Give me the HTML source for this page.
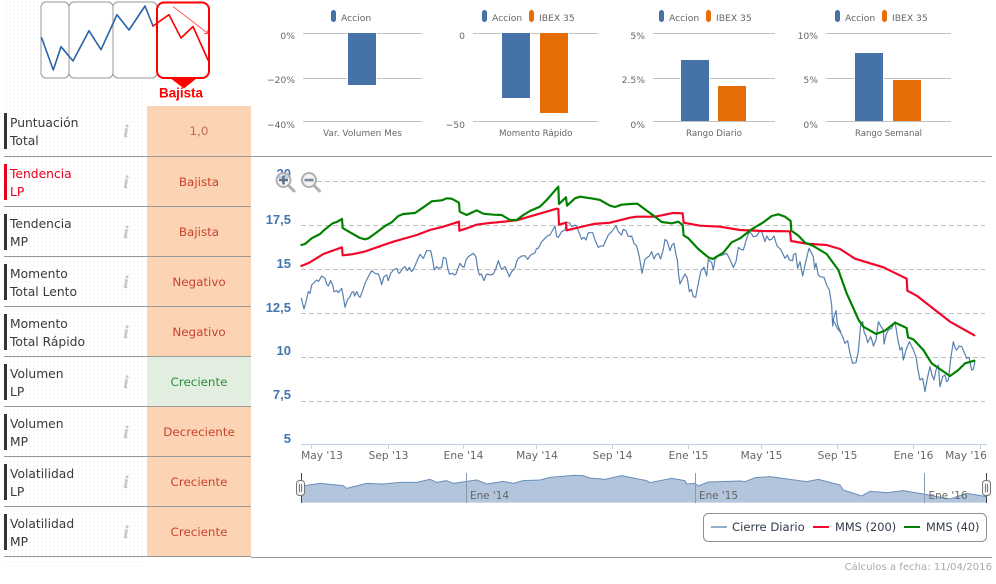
<!DOCTYPE html>
<html lang="es"><head><meta charset="utf-8"><title>Análisis</title>
<style>
html,body{margin:0;padding:0;background:#fff;width:996px;height:584px;overflow:hidden}
svg{display:block;font-family:"DejaVu Sans","Liberation Sans",sans-serif}
.l{font-size:12.3px;fill:#3a3a3a}
.c{font-size:11.9px;text-anchor:middle}
.r{fill:#c9432f}
.i{font-family:"Liberation Serif",serif;font-style:italic;font-weight:bold;font-size:18px;fill:#c8c8c8;stroke:#c8c8c8;stroke-width:.3;text-anchor:middle}
.s{font-size:9.2px;fill:#666}
.e{text-anchor:end}
.m{text-anchor:middle}
.y{font-family:"Liberation Sans",sans-serif;font-weight:bold;font-size:13px;fill:#4276b0;text-anchor:end}
.x{font-size:10.6px;fill:#666;text-anchor:middle}
.g{stroke:#c0c0c0;stroke-width:1;stroke-dasharray:5 3}
.b{stroke:#c0c0c0;stroke-width:1}
.h{stroke:#999;stroke-width:1}
.z{fill:none;stroke-linejoin:round;stroke-linecap:round}
</style></head><body>
<svg width="996" height="584" viewBox="0 0 996 584" xmlns="http://www.w3.org/2000/svg">
<defs><pattern id="d" width="4" height="4" patternUnits="userSpaceOnUse"><rect x="1" y="1" width="2" height="2" fill="#f8f8f8"/></pattern></defs>
<rect x="5" y="0" width="140" height="566" fill="url(#d)"/>

<!-- trend widget -->
<g fill="#fff" stroke="#999" stroke-width="1">
<rect x="41" y="2" width="28" height="76" rx="5"/>
<rect x="69" y="2" width="44" height="76" rx="5"/>
<rect x="113" y="2" width="44" height="76" rx="5"/>
</g>
<rect x="157" y="2.5" width="52" height="75.5" rx="7" fill="#fff" stroke="#f00" stroke-width="2"/>
<path d="M170 78L197 78L184 88.5Z" fill="#f00"/>
<polyline class="z" stroke="#2a62a8" stroke-width="1.6" points="41.7,38 53.3,70 61,46.7 73,61 89,30.7 101,49.7 117,14.7 129,30 145,6 153,26"/>
<polyline class="z" stroke="#f00" stroke-width="1.6" points="153,26 169,14.7 181,38 193,26.5 208,60"/>
<path d="M173 6.5L208 33.5M204 33.5L208 33.5L207 30" fill="none" stroke="#f55" stroke-width=".9"/>
<text x="181" y="97.5" text-anchor="middle" style="font-family:'Liberation Sans',sans-serif;font-weight:bold;font-size:13.4px" fill="#f00">Bajista</text>

<!-- cells -->
<rect x="147" y="106" width="104" height="50" fill="#fcd4b4"/>
<rect x="147" y="157" width="104" height="49" fill="#fcd4b4"/>
<rect x="147" y="207" width="104" height="49" fill="#fcd4b4"/>
<rect x="147" y="257" width="104" height="49" fill="#fcd4b4"/>
<rect x="147" y="307" width="104" height="49" fill="#fcd4b4"/>
<rect x="147" y="357" width="104" height="49" fill="#e2efe0"/>
<rect x="147" y="407" width="104" height="49" fill="#fcd4b4"/>
<rect x="147" y="457" width="104" height="49" fill="#fcd4b4"/>
<rect x="147" y="507" width="104" height="49" fill="#fcd4b4"/>

<!-- row separators -->
<line class="h" x1="4" x2="992" y1="156.5" y2="156.5"/>
<line class="h" x1="4" x2="251" y1="206.5" y2="206.5"/>
<line class="h" x1="4" x2="251" y1="256.5" y2="256.5"/>
<line class="h" x1="4" x2="251" y1="306.5" y2="306.5"/>
<line class="h" x1="4" x2="251" y1="356.5" y2="356.5"/>
<line class="h" x1="4" x2="251" y1="406.5" y2="406.5"/>
<line class="h" x1="4" x2="251" y1="456.5" y2="456.5"/>
<line class="h" x1="4" x2="251" y1="556.5" y2="556.5"/>
<line class="h" x1="4" x2="251" y1="506.5" y2="506.5"/>
<line class="h" x1="251" x2="992" y1="557.5" y2="557.5"/>

<!-- left bars -->
<g fill="#333">
<rect x="4" y="113" width="3" height="36"/>
<rect x="4" y="214" width="3" height="36"/>
<rect x="4" y="264" width="3" height="36"/>
<rect x="4" y="314" width="3" height="36"/>
<rect x="4" y="364" width="3" height="36"/>
<rect x="4" y="414" width="3" height="36"/>
<rect x="4" y="464" width="3" height="36"/>
<rect x="4" y="514" width="3" height="36"/>
</g>
<rect x="4" y="164" width="3" height="36" fill="#e8001c"/>

<!-- row labels -->
<text class="l" x="10" y="127">Puntuación</text><text class="l" x="10" y="145">Total</text>
<text class="l" x="10" y="178" style="fill:#e8001c">Tendencia</text><text class="l" x="10" y="196" style="fill:#e8001c">LP</text>
<text class="l" x="10" y="228">Tendencia</text><text class="l" x="10" y="246">MP</text>
<text class="l" x="10" y="278">Momento</text><text class="l" x="10" y="296">Total Lento</text>
<text class="l" x="10" y="328">Momento</text><text class="l" x="10" y="346">Total Rápido</text>
<text class="l" x="10" y="378">Volumen</text><text class="l" x="10" y="396">LP</text>
<text class="l" x="10" y="428">Volumen</text><text class="l" x="10" y="446">MP</text>
<text class="l" x="10" y="478">Volatilidad</text><text class="l" x="10" y="496">LP</text>
<text class="l" x="10" y="528">Volatilidad</text><text class="l" x="10" y="546">MP</text>

<!-- i icons -->
<text class="i" x="126" y="137">i</text>
<text class="i" x="126" y="188">i</text>
<text class="i" x="126" y="238">i</text>
<text class="i" x="126" y="288">i</text>
<text class="i" x="126" y="338">i</text>
<text class="i" x="126" y="388">i</text>
<text class="i" x="126" y="438">i</text>
<text class="i" x="126" y="488">i</text>
<text class="i" x="126" y="538">i</text>

<!-- values -->
<text class="c" x="199" y="135" fill="#c4685a">1,0</text>
<text class="c r" x="199" y="186">Bajista</text>
<text class="c r" x="199" y="236">Bajista</text>
<text class="c r" x="199" y="286">Negativo</text>
<text class="c r" x="199" y="336">Negativo</text>
<text class="c" x="199" y="386" fill="#2e8b3a">Creciente</text>
<text class="c r" x="199" y="436">Decreciente</text>
<text class="c r" x="199" y="486">Creciente</text>
<text class="c r" x="199" y="536">Creciente</text>

<!-- bar chart 1 -->
<line class="b" x1="303" x2="422" y1="33.5" y2="33.5"/><line class="b" x1="303" x2="422" y1="78.5" y2="78.5"/><line class="b" x1="303" x2="422" y1="121.5" y2="121.5"/>
<rect x="347" y="33" width="30" height="53" fill="#fff"/><rect x="348" y="33" width="28" height="52" fill="#4572a7"/>
<rect x="331" y="10" width="5" height="12" rx="2.5" fill="#4572a7"/><text class="s" x="341" y="21">Accion</text>
<text class="s e" x="295" y="39">0%</text><text class="s e" x="295" y="83">−20%</text><text class="s e" x="295" y="128">−40%</text>
<text class="s" x="323" y="136" textLength="79" lengthAdjust="spacingAndGlyphs">Var. Volumen Mes</text>

<!-- bar chart 2 -->
<line class="b" x1="473" x2="598" y1="33.5" y2="33.5"/><line class="b" x1="473" x2="598" y1="121.5" y2="121.500"/>
<rect x="501" y="33" width="30" height="66" fill="#fff"/><rect x="539" y="33" width="30" height="81" fill="#fff"/>
<rect x="502" y="33" width="28" height="65" fill="#4572a7"/><rect x="540" y="33" width="28" height="80" fill="#e66c06"/>
<rect x="482" y="10" width="5" height="12" rx="2.5" fill="#4572a7"/><text class="s" x="492" y="21">Accion</text>
<rect x="529" y="10" width="5" height="12" rx="2.5" fill="#e66c06"/><text class="s" x="539" y="21">IBEX 35</text>
<text class="s e" x="465" y="39">0</text><text class="s e" x="465" y="128">−50</text>
<text class="s" x="499" y="136" textLength="73.5" lengthAdjust="spacingAndGlyphs">Momento Rápido</text>

<!-- bar chart 3 -->
<line class="b" x1="653" x2="775" y1="33.5" y2="33.5"/><line class="b" x1="653" x2="775" y1="78.5" y2="78.5"/><line class="b" x1="653" x2="775" y1="121.5" y2="121.5"/>
<rect x="680" y="59" width="30" height="62" fill="#fff"/><rect x="717" y="85" width="30" height="36" fill="#fff"/>
<rect x="681" y="60" width="28" height="61" fill="#4572a7"/><rect x="718" y="86" width="28" height="35" fill="#e66c06"/>
<rect x="659" y="10" width="5" height="12" rx="2.5" fill="#4572a7"/><text class="s" x="669" y="21">Accion</text>
<rect x="706" y="10" width="5" height="12" rx="2.5" fill="#e66c06"/><text class="s" x="716" y="21">IBEX 35</text>
<text class="s e" x="645" y="39">5%</text><text class="s e" x="645" y="83">2.5%</text><text class="s e" x="645" y="128">0%</text>
<text class="s" x="686" y="136" textLength="56" lengthAdjust="spacingAndGlyphs">Rango Diario</text>

<!-- bar chart 4 -->
<line class="b" x1="826" x2="951" y1="33.5" y2="33.5"/><line class="b" x1="826" x2="951" y1="78.5" y2="78.5"/><line class="b" x1="826" x2="951" y1="121.5" y2="121.5"/>
<rect x="854" y="52" width="30" height="69" fill="#fff"/><rect x="892" y="79" width="30" height="42" fill="#fff"/>
<rect x="855" y="53" width="28" height="68" fill="#4572a7"/><rect x="893" y="80" width="28" height="41" fill="#e66c06"/>
<rect x="835" y="10" width="5" height="12" rx="2.5" fill="#4572a7"/><text class="s" x="845" y="21">Accion</text>
<rect x="882" y="10" width="5" height="12" rx="2.5" fill="#e66c06"/><text class="s" x="892" y="21">IBEX 35</text>
<text class="s e" x="818" y="39">10%</text><text class="s e" x="818" y="83">5%</text><text class="s e" x="818" y="128">0%</text>
<text class="s" x="855" y="136" textLength="67" lengthAdjust="spacingAndGlyphs">Rango Semanal</text>

<!-- main chart grid -->
<line class="g" x1="301" x2="985" y1="181.500" y2="181.500"/>
<line class="g" x1="301" x2="985" y1="225.500" y2="225.500"/>
<line class="g" x1="301" x2="985" y1="269.500" y2="269.500"/>
<line class="g" x1="301" x2="985" y1="313.500" y2="313.500"/>
<line class="g" x1="301" x2="985" y1="357.500" y2="357.500"/>
<line class="g" x1="301" x2="985" y1="401.500" y2="401.500"/>
<line x1="301" x2="987" y1="444.500" y2="444.500" stroke="#c0d0e0"/>
<path d="M311.500 444V449M388.500 444V449M463.500 444V449M536.500 444V449M612.500 444V449M688.500 444V449M761.500 444V449M837.500 444V449M913.500 444V449M980.500 444V449" stroke="#c0d0e0"/>

<text class="y" x="291" y="178">20</text>
<text class="y" x="291" y="224">17,5</text>
<text class="y" x="291" y="268">15</text>
<text class="y" x="291" y="312">12,5</text>
<text class="y" x="291" y="355">10</text>
<text class="y" x="291" y="399">7,5</text>
<text class="y" x="291" y="443">5</text>

<!-- zoom icons -->
<g fill="none" stroke="#b0b0b0">
<path d="M288.500 185.500L294 191M314 185.500L319.500 191" stroke-width="3" stroke-linecap="round"/>
<circle cx="283.500" cy="180" r="7" stroke-width="2" fill="#eee" fill-opacity=".6"/>
<circle cx="309" cy="180" r="7" stroke-width="2" fill="#eee" fill-opacity=".6"/>
</g>
<path d="M279 180H288M283.500 175.500V184.500" stroke="#5a7088" stroke-width="2.500" fill="none"/>
<path d="M304.500 180H313.500" stroke="#7a8a9a" stroke-width="2.500" fill="none"/>

<!-- blue price line -->
<g transform="translate(260,160) scale(.33333)" stroke="#4572a7" stroke-width="3.6" stroke-opacity=".9">
<polyline class="z" points="124,415 132,447 138,425 145,395 150,400 155,375 162,368 170,360 176,364 185,348 195,355 200,372 205,378 212,362 218,375 222,395 230,392 235,398 245,385 250,410 255,442 262,420 270,410 275,398 280,395 284,408 290,395 296,408 300,412 308,392 315,370 325,350 335,332 345,340 355,342 360,355 365,374 372,350 380,345 385,362 392,340 400,330 410,325 416,340 420,338 428,325 435,320 442,332 448,322 455,335 462,325 470,305 480,283 490,295 500,272 512,272 518,300 523,330 530,320 535,325 545,322 550,292 558,295 563,325 568,342 578,340 583,345 588,342 594,325 600,310 606,318 612,322 618,300 625,290 640,280 648,290 652,320 658,345 664,342 672,362 678,345 682,342 690,345 700,342 708,325 715,302 722,322 725,328 735,320 742,335 748,350 755,335 765,325 770,305 775,295 785,288 795,287 803,298 812,285 825,278 830,265 835,265 845,245 855,235 862,228 870,225 878,210 885,198 890,230 895,232 905,215 915,210 920,186 930,190 935,200 945,195 950,200 958,220 965,238 972,232 978,240 985,218 998,218 1005,240 1015,262 1022,258 1030,258 1038,240 1045,225 1055,215 1068,197 1075,215 1085,225 1090,208 1098,212 1104,228 1110,230"/>
</g>
<g transform="translate(630,160) scale(.33333)" stroke="#4572a7" stroke-width="3.6" stroke-opacity=".9">
<polyline class="z" points="0,230 5,228 12,250 20,258 28,290 32,315 36,340 45,298 52,292 58,288 65,275 72,297 78,285 85,280 92,297 100,268 105,238 112,245 120,272 126,255 132,250 138,285 142,300 146,345 150,372 158,355 165,342 172,355 178,395 184,388 190,410 197,412 204,375 213,332 222,322 230,348 235,298 245,308 250,330 255,298 265,288 278,285 290,280 298,295 310,322 318,305 325,262 332,268 340,270 350,235 358,215 365,222 370,230 380,228 388,215 395,215 405,245 410,228 418,240 425,238 432,228 440,255 445,262 452,268 465,295 472,285 478,300 488,302 490,285 497,280 503,325 510,305 518,348 526,310 537,265 545,280 550,290 554,325 558,310 565,345 570,350 582,352 590,375 598,390 605,435 608,498 612,470 618,452 622,490 625,500 632,515"/>
</g>
<g transform="translate(630,320) scale(.33333)" stroke="#4572a7" stroke-width="3.6" stroke-opacity=".9">
<polyline class="z" points="607,0 615,10 622,25 630,35 637,48 645,70 653,62 660,100 668,130 678,128 685,95 692,15 698,5 702,35 708,48 713,68 722,50 727,65 730,78 738,60 745,5 752,18 760,30 762,72 768,45 775,30 785,25 795,5 803,55 810,90 816,82 820,120 828,90 838,65 848,85 858,110 864,150 870,180 878,175 885,215 892,175 900,140 906,165 912,180 918,150 925,135 930,200 938,170 945,165 950,185 955,180 963,110 970,65 976,85 980,90 988,78 995,80 1005,102 1010,115 1017,112 1025,150 1030,148 1035,125"/>
</g>

<!-- red MMS 200 -->
<g transform="translate(260,160) scale(.33333)" stroke="#f4062a" stroke-width="6.500">
<polyline class="z" points="124,318 150,307 190,282 246,262 248,286 275,283 310,276 400,245 470,225 510,210 550,200 597,185 598,212 620,205 650,194 680,190 770,181 890,146 895,147 897,194 918,188 920,211 1000,192 1050,188 1110,173"/>
</g>
<g transform="translate(630,160) scale(.33333)" stroke="#f4062a" stroke-width="6.500">
<polyline class="z" points="0,173 20,170 75,170 130,159 158,160 161,188 210,197 270,200 330,210 400,213 480,214 483,243 530,251 590,255 630,267 675,296 760,322 830,356 832,392 860,407 960,485 1033,526"/>
</g>

<!-- green MMS 40 -->
<g transform="translate(260,160) scale(.33333)" stroke="#008000" stroke-width="6.500">
<polyline class="z" points="124,255 135,252 155,235 180,222 195,208 218,190 230,186 246,177 248,204 270,217 300,234 315,238 325,235 350,217 375,198 395,187 415,168 430,162 465,159 490,142 515,124 545,121 560,115 575,116 597,128 599,155 620,165 650,151 670,161 700,164 725,165 750,180 770,180 790,165 810,153 840,140 860,120 895,80 897,132 918,112 921,137 945,115 960,110 1000,116 1020,120 1050,137 1065,141 1085,134 1110,132"/>
</g>
<g transform="translate(630,160) scale(.33333)" stroke="#008000" stroke-width="6.500">
<polyline class="z" points="0,132 22,131 45,148 75,170 95,186 125,190 145,185 158,195 161,226 175,235 205,267 235,292 248,297 280,278 305,247 330,235 365,208 400,187 425,168 445,163 465,170 482,183 484,212 505,227 525,248 550,258 590,282 625,330 650,400 686,480 700,500 738,522 765,512 795,488 830,504 834,532 850,538 880,570 905,610 960,648 985,630 1005,610 1033,602"/>
</g>

<!-- x axis labels -->
<text class="x" x="322" y="459">May '13</text>
<text class="x" x="388.500" y="459">Sep '13</text>
<text class="x" x="463.500" y="459">Ene '14</text>
<text class="x" x="537" y="459">May '14</text>
<text class="x" x="612.500" y="459">Sep '14</text>
<text class="x" x="688.500" y="459">Ene '15</text>
<text class="x" x="761.500" y="459">May '15</text>
<text class="x" x="837.500" y="459">Sep '15</text>
<text class="x" x="913.500" y="459">Ene '16</text>
<text class="x" x="966" y="459">May '16</text>

<!-- navigator -->
<g transform="translate(260,320) scale(.33333)">
<polygon fill="#b3c5dc" points="124,548 124,500 135,497 180,490 250,497 260,505 320,490 370,492 420,487 470,487 510,478 530,487 560,482 580,490 620,484 650,480 680,492 730,484 760,490 790,482 840,480 870,472 940,466 970,467 990,474 1035,478 1085,467 1110,472 1110,548"/>
<polyline class="z" stroke="#6a8fba" stroke-width="3" points="124,500 135,497 180,490 250,497 260,505 320,490 370,492 420,487 470,487 510,478 530,487 560,482 580,490 620,484 650,480 680,492 730,484 760,490 790,482 840,480 870,472 940,466 970,467 990,474 1035,478 1085,467 1110,472"/>
</g>
<g transform="translate(630,320) scale(.33333)">
<polygon fill="#b3c5dc" points="0,548 0,472 50,482 60,488 125,475 165,482 170,492 195,490 205,498 235,486 330,483 345,485 375,473 420,470 480,478 530,485 565,478 630,495 640,510 695,528 720,514 770,518 820,512 880,522 920,530 960,537 1010,520 1070,530 1070,548"/>
<polyline class="z" stroke="#6a8fba" stroke-width="3" points="0,472 50,482 60,488 125,475 165,482 170,492 195,490 205,498 235,486 330,483 345,485 375,473 420,470 480,478 530,485 565,478 630,495 640,510 695,528 720,514 770,518 820,512 880,522 920,530 960,537 1010,520 1070,530"/>
</g>
<path d="M466.500 473V503M695.500 473V503M924.500 473V503" stroke="#8a9aae"/>
<text style="font-size:10.4px" fill="#666" x="470" y="499">Ene '14</text>
<text style="font-size:10.4px" fill="#666" x="699" y="499">Ene '15</text>
<text style="font-size:10.4px" fill="#666" x="928.500" y="499">Ene '16</text>
<path d="M301.500 473V503M986.500 473V503" stroke="#444"/>
<g fill="#f4f4f4" stroke="#777">
<rect x="296.500" y="480.500" width="8" height="15" rx="3"/>
<rect x="982.500" y="480.500" width="8" height="15" rx="3"/>
</g>
<path d="M299.500 484V492M301.500 484V492M985.500 484V492M987.500 484V492" stroke="#777"/>

<!-- legend -->
<rect x="703.500" y="513.500" width="283" height="28" rx="5" fill="#fff" stroke="#909090"/>
<line x1="711" x2="727" y1="527" y2="527" stroke="#94adcb" stroke-width="2"/>
<line x1="813" x2="829" y1="527" y2="527" stroke="#f4062a" stroke-width="2"/>
<line x1="904" x2="920" y1="527" y2="527" stroke="#008000" stroke-width="2"/>
<text style="font-size:11.6px" fill="#2f3a4a" x="732" y="531">Cierre Diario</text>
<text style="font-size:11.4px" fill="#2f3a4a" x="835" y="531">MMS (200)</text>
<text style="font-size:11.3px" fill="#2f3a4a" x="926" y="531">MMS (40)</text>

<text x="992" y="570" text-anchor="end" style="font-size:10.1px" fill="#aaa">Cálculos a fecha: 11/04/2016</text>
</svg>
</body></html>
